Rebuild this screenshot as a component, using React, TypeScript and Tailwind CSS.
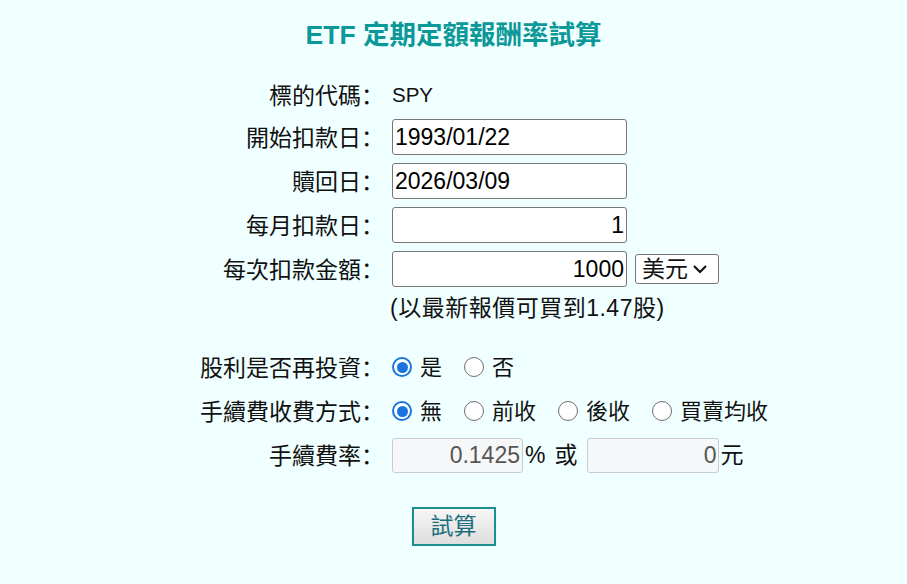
import React from "react";

interface RowProps {
    label?: string
    className?: string
    children?: React.ReactNode
}

function Row({ label, className, children }: RowProps) {
    return (
        <div className={`flex items-center ${className ?? "h-[44px]"}`}>
            <div className="w-[184px] shrink-0 whitespace-nowrap text-right text-[23px] text-[#111]">
                {label}
                {label && <span className="font-['Noto_Sans_CJK_SC',sans-serif]">：</span>}
            </div>
            <div className="ml-[8px] flex items-center">{children}</div>
        </div>
    )
}

function TextBox({ value, right }: { value: string, right?: boolean }) {
    return (
        <input
            readOnly
            value={value}
            className={`h-[36px] w-[235px] rounded-[3px] border border-[#767676] bg-white px-[2px] text-[23px] text-black outline-none ${right ? "text-right" : "text-left"}`}
        />
    )
}

function Radio({ label, checked }: { label: string, checked?: boolean }) {
    return (
        <label className="mr-[22px] flex items-center gap-[8px] text-[22px] text-[#111]">
            {checked ? (
                <span className="flex h-[20px] w-[20px] shrink-0 items-center justify-center rounded-full border-2 border-[#1a74e0] bg-white">
                    <span className="h-[11px] w-[11px] rounded-full bg-[#1a74e0]" />
                </span>
            ) : (
                <span className="h-[20px] w-[20px] shrink-0 rounded-full border-[1.5px] border-[#6f6f6f] bg-white" />
            )}
            <span>{label}</span>
        </label>
    )
}

export default function App() {
    return (
        <div className="min-h-[584px] w-full bg-[#f0ffff] pt-[16px] font-['Liberation_Sans','Noto_Sans_CJK_TC',sans-serif]">
            <h1 className="h-[39px] text-center text-[26.5px] font-bold leading-[39px] text-[#0a9898]">
                ETF 定期定額報酬率試算
            </h1>

            <div className="ml-[200px] mt-[21px]">
                <Row label="標的代碼" className="h-[39px]">
                    <span className="text-[20.5px] text-[#111]">SPY</span>
                </Row>
                <Row label="開始扣款日">
                    <TextBox value="1993/01/22" />
                </Row>
                <Row label="贖回日">
                    <TextBox value="2026/03/09" />
                </Row>
                <Row label="每月扣款日">
                    <TextBox value="1" right />
                </Row>
                <Row label="每次扣款金額">
                    <TextBox value="1000" right />
                    <div className="ml-[8px] flex h-[30px] w-[84px] items-center rounded-[3px] border border-[#767676] bg-white pl-[6px] text-[23px] text-[#111]">
                        <span>美元</span>
                        <svg className="ml-[4px]" width="16" height="10" viewBox="0 0 16 10" fill="none">
                            <path d="M2 2 L8 8 L14 2" stroke="#111" strokeWidth="2.2" />
                        </svg>
                    </div>
                </Row>
                <Row className="h-[34px]">
                    <span className="-ml-[2px] text-[23px] tracking-[0.5px] text-[#111]">(以最新報價可買到1.47股)</span>
                </Row>

                <div className="h-[20px]" />

                <Row label="股利是否再投資">
                    <Radio label="是" checked />
                    <Radio label="否" />
                </Row>
                <Row label="手續費收費方式">
                    <Radio label="無" checked />
                    <Radio label="前收" />
                    <Radio label="後收" />
                    <Radio label="買賣均收" />
                </Row>
                <Row label="手續費率">
                    <input
                        disabled
                        value="0.1425"
                        readOnly
                        className="h-[35px] w-[131px] rounded-[3px] border border-[#c8cccf] bg-[#f5f7f8] px-[2px] text-right text-[23px] text-[#555]"
                    />
                    <span className="ml-[2px] text-[23px] text-[#111]">%</span>
                    <span className="ml-[9px] mr-[10px] text-[23px] text-[#111]">或</span>
                    <input
                        disabled
                        value="0"
                        readOnly
                        className="h-[35px] w-[132px] rounded-[3px] border border-[#c8cccf] bg-[#f5f7f8] px-[2px] text-right text-[23px] text-[#555]"
                    />
                    <span className="ml-[1px] text-[23px] text-[#111]">元</span>
                </Row>
            </div>

            <div className="mt-[30px] flex justify-center">
                <button className="h-[39px] w-[84px] border-2 border-[#1a8f8f] bg-gradient-to-b from-[#f6f6f6] to-[#dedede] text-[23px] text-[#1c6e7c]">
                    試算
                </button>
            </div>
        </div>
    )
}
